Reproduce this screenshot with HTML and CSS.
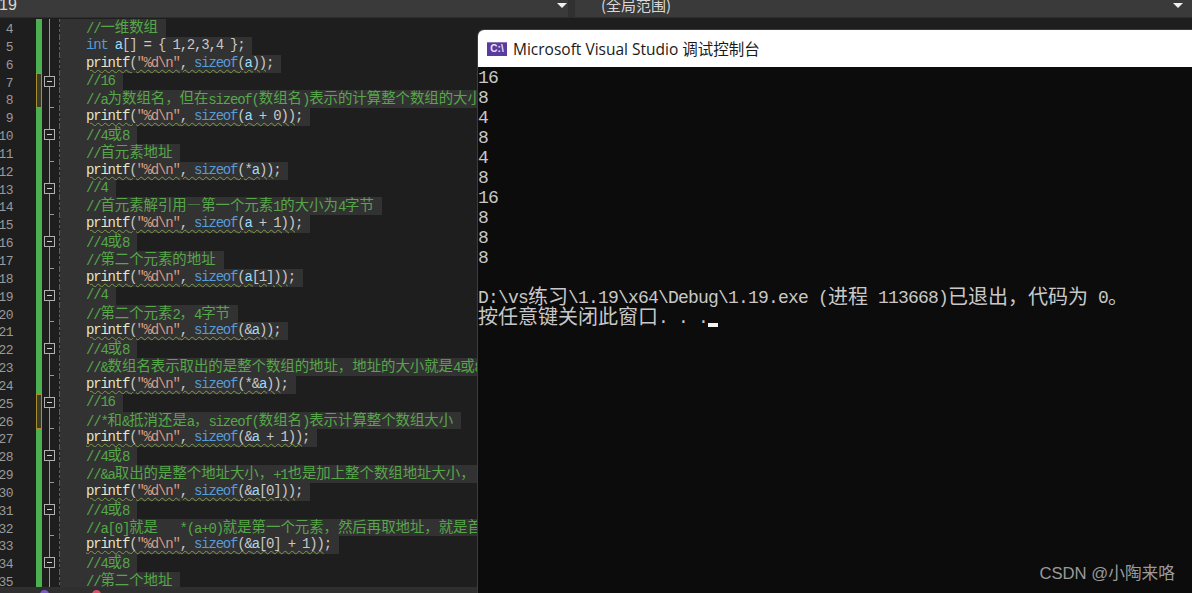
FILE: index.html
```html
<!DOCTYPE html>
<html lang="zh">
<head>
<meta charset="utf-8">
<title>Visual Studio</title>
<link rel="stylesheet" href="styles.css">
</head>
<body>
<div class="ide">
  <header class="navbar">
    <div class="combo combo-left"><span class="combo-text">19</span><span class="arrow"></span></div>
    <div class="combo combo-right"><span class="combo-text">(全局范围)</span><span class="arrow"></span></div>
  </header>
  <main class="editor">
    <div class="row"><span class="num">4</span><span class="bar"></span><span class="fold"></span><span class="code"><span class="sel c">//<i>一维数组</i></span></span></div>
    <div class="row"><span class="num">5</span><span class="bar"></span><span class="fold"></span><span class="code"><span class="sel"><b class="kw">int</b> <b class="var">a</b>[] = { 1,2,3,4 };</span></span></div>
    <div class="row"><span class="num">6</span><span class="bar"></span><span class="fold"></span><span class="code"><span class="sel"><span class="sq"><b class="fn">printf</b>(<b class="str">"%d\n"</b>, <b class="kw">sizeof</b>(<b class="var">a</b>))</span>;</span></span></div>
    <div class="row"><span class="num">7</span><span class="bar mod-top"></span><span class="fold"><span class="box"></span></span><span class="code"><span class="sel c">//16</span></span></div>
    <div class="row"><span class="num">8</span><span class="bar mod-bot"></span><span class="fold end"></span><span class="code"><span class="sel c">//a<i>为数组名，但在</i>sizeof(<i>数组名</i>)<i>表示的计算整个数组的大小</i></span></span></div>
    <div class="row"><span class="num">9</span><span class="bar"></span><span class="fold"></span><span class="code"><span class="sel"><span class="sq"><b class="fn">printf</b>(<b class="str">"%d\n"</b>, <b class="kw">sizeof</b>(<b class="var">a</b> + 0))</span>;</span></span></div>
    <div class="row"><span class="num">10</span><span class="bar"></span><span class="fold"><span class="box"></span></span><span class="code"><span class="sel c">//4<i>或</i>8</span></span></div>
    <div class="row"><span class="num">11</span><span class="bar"></span><span class="fold end"></span><span class="code"><span class="sel c">//<i>首元素地址</i></span></span></div>
    <div class="row"><span class="num">12</span><span class="bar"></span><span class="fold"></span><span class="code"><span class="sel"><span class="sq"><b class="fn">printf</b>(<b class="str">"%d\n"</b>, <b class="kw">sizeof</b>(*<b class="var">a</b>))</span>;</span></span></div>
    <div class="row"><span class="num">13</span><span class="bar"></span><span class="fold"><span class="box"></span></span><span class="code"><span class="sel c">//4</span></span></div>
    <div class="row"><span class="num">14</span><span class="bar"></span><span class="fold end"></span><span class="code"><span class="sel c">//<i>首元素解引用—第一个元素</i>1<i>的大小为</i>4<i>字节</i></span></span></div>
    <div class="row"><span class="num">15</span><span class="bar"></span><span class="fold"></span><span class="code"><span class="sel"><span class="sq"><b class="fn">printf</b>(<b class="str">"%d\n"</b>, <b class="kw">sizeof</b>(<b class="var">a</b> + 1))</span>;</span></span></div>
    <div class="row"><span class="num">16</span><span class="bar"></span><span class="fold"><span class="box"></span></span><span class="code"><span class="sel c">//4<i>或</i>8</span></span></div>
    <div class="row"><span class="num">17</span><span class="bar"></span><span class="fold end"></span><span class="code"><span class="sel c">//<i>第二个元素的地址</i></span></span></div>
    <div class="row"><span class="num">18</span><span class="bar"></span><span class="fold"></span><span class="code"><span class="sel"><span class="sq"><b class="fn">printf</b>(<b class="str">"%d\n"</b>, <b class="kw">sizeof</b>(<b class="var">a</b>[1]))</span>;</span></span></div>
    <div class="row"><span class="num">19</span><span class="bar"></span><span class="fold"><span class="box"></span></span><span class="code"><span class="sel c">//4</span></span></div>
    <div class="row"><span class="num">20</span><span class="bar"></span><span class="fold end"></span><span class="code"><span class="sel c">//<i>第二个元素</i>2<i>，</i>4<i>字节</i></span></span></div>
    <div class="row"><span class="num">21</span><span class="bar"></span><span class="fold"></span><span class="code"><span class="sel"><span class="sq"><b class="fn">printf</b>(<b class="str">"%d\n"</b>, <b class="kw">sizeof</b>(&amp;<b class="var">a</b>))</span>;</span></span></div>
    <div class="row"><span class="num">22</span><span class="bar"></span><span class="fold"><span class="box"></span></span><span class="code"><span class="sel c">//4<i>或</i>8</span></span></div>
    <div class="row"><span class="num">23</span><span class="bar"></span><span class="fold end"></span><span class="code"><span class="sel c">//&amp;<i>数组名表示取出的是整个数组的地址，地址的大小就是</i>4<i>或</i>8</span></span></div>
    <div class="row"><span class="num">24</span><span class="bar"></span><span class="fold"></span><span class="code"><span class="sel"><span class="sq"><b class="fn">printf</b>(<b class="str">"%d\n"</b>, <b class="kw">sizeof</b>(*&amp;<b class="var">a</b>))</span>;</span></span></div>
    <div class="row"><span class="num">25</span><span class="bar mod-top"></span><span class="fold"><span class="box"></span></span><span class="code"><span class="sel c">//16</span></span></div>
    <div class="row"><span class="num">26</span><span class="bar mod-bot"></span><span class="fold end"></span><span class="code"><span class="sel c">//*<i>和</i>&amp;<i>抵消还是</i>a<i>，</i>sizeof(<i>数组名</i>)<i>表示计算整个数组大小</i></span></span></div>
    <div class="row"><span class="num">27</span><span class="bar"></span><span class="fold"></span><span class="code"><span class="sel"><span class="sq"><b class="fn">printf</b>(<b class="str">"%d\n"</b>, <b class="kw">sizeof</b>(&amp;<b class="var">a</b> + 1))</span>;</span></span></div>
    <div class="row"><span class="num">28</span><span class="bar"></span><span class="fold"><span class="box"></span></span><span class="code"><span class="sel c">//4<i>或</i>8</span></span></div>
    <div class="row"><span class="num">29</span><span class="bar"></span><span class="fold end"></span><span class="code"><span class="sel c">//&amp;a<i>取出的是整个地址大小，</i>+1<i>也是加上整个数组地址大小，</i></span></span></div>
    <div class="row"><span class="num">30</span><span class="bar"></span><span class="fold"></span><span class="code"><span class="sel"><span class="sq"><b class="fn">printf</b>(<b class="str">"%d\n"</b>, <b class="kw">sizeof</b>(&amp;<b class="var">a</b>[0]))</span>;</span></span></div>
    <div class="row"><span class="num">31</span><span class="bar"></span><span class="fold"><span class="box"></span></span><span class="code"><span class="sel c">//4<i>或</i>8</span></span></div>
    <div class="row"><span class="num">32</span><span class="bar"></span><span class="fold end"></span><span class="code"><span class="sel c">//a[0]<i>就是</i>   *(a+0)<i>就是第一个元素，然后再取地址，就是首</i></span></span></div>
    <div class="row"><span class="num">33</span><span class="bar"></span><span class="fold"></span><span class="code"><span class="sel"><span class="sq"><b class="fn">printf</b>(<b class="str">"%d\n"</b>, <b class="kw">sizeof</b>(&amp;<b class="var">a</b>[0] + 1))</span>;</span></span></div>
    <div class="row"><span class="num">34</span><span class="bar"></span><span class="fold"><span class="box"></span></span><span class="code"><span class="sel c">//4<i>或</i>8</span></span></div>
    <div class="row"><span class="num">35</span><span class="bar"></span><span class="fold"></span><span class="code"><span class="sel c">//<i>第二个地址</i></span></span></div>
  </main>
  <footer class="statusbar"><span class="dot dot-purple"></span><span class="dot dot-red"></span></footer>
</div>

<section class="console">
  <div class="titlebar">
    <span class="appicon">C:\</span>
    <span class="title">Microsoft Visual Studio 调试控制台</span>
  </div>
  <div class="output">
    <div class="ln">16</div>
    <div class="ln">8</div>
    <div class="ln">4</div>
    <div class="ln">8</div>
    <div class="ln">4</div>
    <div class="ln">8</div>
    <div class="ln">16</div>
    <div class="ln">8</div>
    <div class="ln">8</div>
    <div class="ln">8</div>
    <div class="ln"></div>
    <div class="ln">D:\vs<i>练习</i>\1.19\x64\Debug\1.19.exe (<i>进程</i> 113668)<i>已退出，代码为</i> 0<i>。</i></div>
    <div class="ln"><i>按任意键关闭此窗口</i>. . .<span class="cursor"></span></div>
  </div>
  <div class="watermark">CSDN @小陶来咯</div>
</section>
</body>
</html>
```

FILE: styles.css
```css
html, body {
  margin: 0;
  height: 100%;
  overflow: hidden;
  background: #1e1e1e;
}

.ide {
  display: flex;
  flex-direction: column;
  height: 593px;
  overflow: hidden;
}

/* top navigation combos */
.navbar {
  display: flex;
  flex: none;
  height: 17px;
  background: #3a3a3a;
  border-bottom: 1px solid #2e2e2e;
  font-family: "Noto Sans CJK SC", "Noto Sans", sans-serif;
  font-size: 15px;
  line-height: 10px;
  color: #d8d8d8;
}

.combo {
  display: flex;
  justify-content: space-between;
  height: 17px;
}

.combo-left {
  flex: none;
  width: 567px;
  padding-right: 1px;
  border-right: 7px solid #303030;
  box-sizing: content-box;
}

.combo-left .combo-text {
  font-family: "Liberation Sans", sans-serif;
  font-size: 16px;
  margin-left: -1px;
}

.combo-right {
  flex: 1;
  padding: 0 9px 0 26px;
}

.arrow {
  flex: none;
  width: 0;
  height: 0;
  margin-top: 3px;
  border-left: 5px solid transparent;
  border-right: 5px solid transparent;
  border-top: 5px solid #f0f0f0;
}

/* code editor */
.editor {
  flex: 1;
  min-height: 0;
  padding-top: 1px;
  overflow: hidden;
  font-family: "Liberation Mono", "Noto Sans CJK SC", monospace;
  font-size: 14px;
  letter-spacing: -1.2px;
  color: #c8c8c8;
}

.row {
  display: flex;
  height: 17.85px;
  line-height: 17.85px;
  white-space: pre;
}

.num {
  flex: none;
  display: flex;
  justify-content: flex-end;
  width: 13px;
  padding-top: 2px;
  color: #9a9a9a;
  font-size: 13px;
  letter-spacing: -0.6px;
}

.bar {
  flex: none;
  width: 6px;
  margin-left: 23px;
  background: #4caf50;
}

.mod-top,
.mod-bot {
  box-sizing: border-box;
  background: #3b3b28;
  border-left: 1px solid #a8902c;
  border-right: 1px solid #a8902c;
}

.mod-top { border-top: 1px solid #a8902c; }
.mod-bot { border-bottom: 1px solid #a8902c; }

.fold {
  flex: none;
  position: relative;
  width: 11px;
  margin-left: 2px;
  background: linear-gradient(#9a9a9a, #9a9a9a) 5px 0 / 1px 100% no-repeat;
}

.fold.end::after {
  content: "";
  position: absolute;
  left: 5px;
  bottom: 0;
  width: 5px;
  height: 1px;
  background: #9a9a9a;
}

.box {
  position: absolute;
  left: 0;
  top: 3px;
  box-sizing: border-box;
  width: 11px;
  height: 11px;
  background: linear-gradient(#d0d0d0, #d0d0d0) center / 5px 1px no-repeat #1e1e1e;
  border: 1px solid #b0b0b0;
}

.code {
  flex: 1;
  display: flex;
  margin-left: 4px;
  border-left: 1px dashed #5e5e5e;
}

.sel {
  padding: 0 8px 0 26px;
  background: #323232;
}

.code i,
.output i {
  font-family: "Noto Sans CJK SC", sans-serif;
  font-style: normal;
  letter-spacing: 0;
}

.code i {
  font-size: 14.4px;
  line-height: 15px;
  position: relative;
  top: -1px;
}

.code b { font-weight: normal; }

.c { color: #57a64a; }
.kw { color: #569cd6; }
.var { color: #9cdcfe; }
.fn { color: #e6e6c8; }
.str { color: #d69d85; }

.sq {
  text-decoration: underline wavy #7f9c4e 1px;
  text-underline-offset: 2px;
}

/* bottom tab strip */
.statusbar {
  position: relative;
  flex: none;
  height: 6px;
  overflow: hidden;
  background: #2f2f2f;
}

.dot {
  position: absolute;
  top: 3px;
  width: 9px;
  height: 9px;
  border-radius: 50%;
}

.dot-purple { left: 40px; background: #7a5cc0; }
.dot-red { left: 92px; background: #d8506a; }

/* debug console window */
.console {
  position: absolute;
  left: 477px;
  top: 29px;
  right: 0;
  bottom: 0;
  display: flex;
  flex-direction: column;
  overflow: hidden;
  background: #0c0c0c;
  border-top: 1px solid #3c3c3c;
  border-left: 1px solid #3c3c3c;
  border-top-left-radius: 7px;
}

.titlebar {
  flex: none;
  display: flex;
  align-items: center;
  gap: 6px;
  height: 37px;
  padding-left: 9px;
  background: #fff;
  color: #1a1a1a;
  font-family: "Open Sans", "Noto Sans CJK SC", sans-serif;
  font-size: 15.5px;
  line-height: 34px;
  white-space: nowrap;
}

.appicon {
  flex: none;
  width: 20px;
  height: 14px;
  background: #5b3a9e;
  border-top: 1px solid #8a78b8;
  box-sizing: border-box;
  color: #e8e4f4;
  font-family: "Liberation Sans", sans-serif;
  font-size: 10px;
  font-weight: 700;
  line-height: 12px;
  text-align: center;
}

.output {
  flex: 1;
  padding-top: 1px;
  font-family: "Liberation Mono", "Noto Sans CJK SC", monospace;
  font-size: 18px;
  letter-spacing: -0.8px;
  color: #c8c8c8;
}

.ln {
  display: flex;
  align-items: center;
  height: 20px;
  line-height: 20px;
  white-space: pre;
}

.output i {
  font-size: 20px;
  position: relative;
  top: -2px;
}

.cursor {
  flex: none;
  align-self: flex-end;
  width: 10px;
  height: 4px;
  margin-bottom: 1px;
  background: #f2f2f2;
}

.watermark {
  position: absolute;
  right: 17px;
  bottom: 9px;
  color: #9a9a9a;
  font-family: "Liberation Sans", "Noto Sans CJK SC", sans-serif;
  font-size: 16.7px;
  line-height: 20px;
}
```
